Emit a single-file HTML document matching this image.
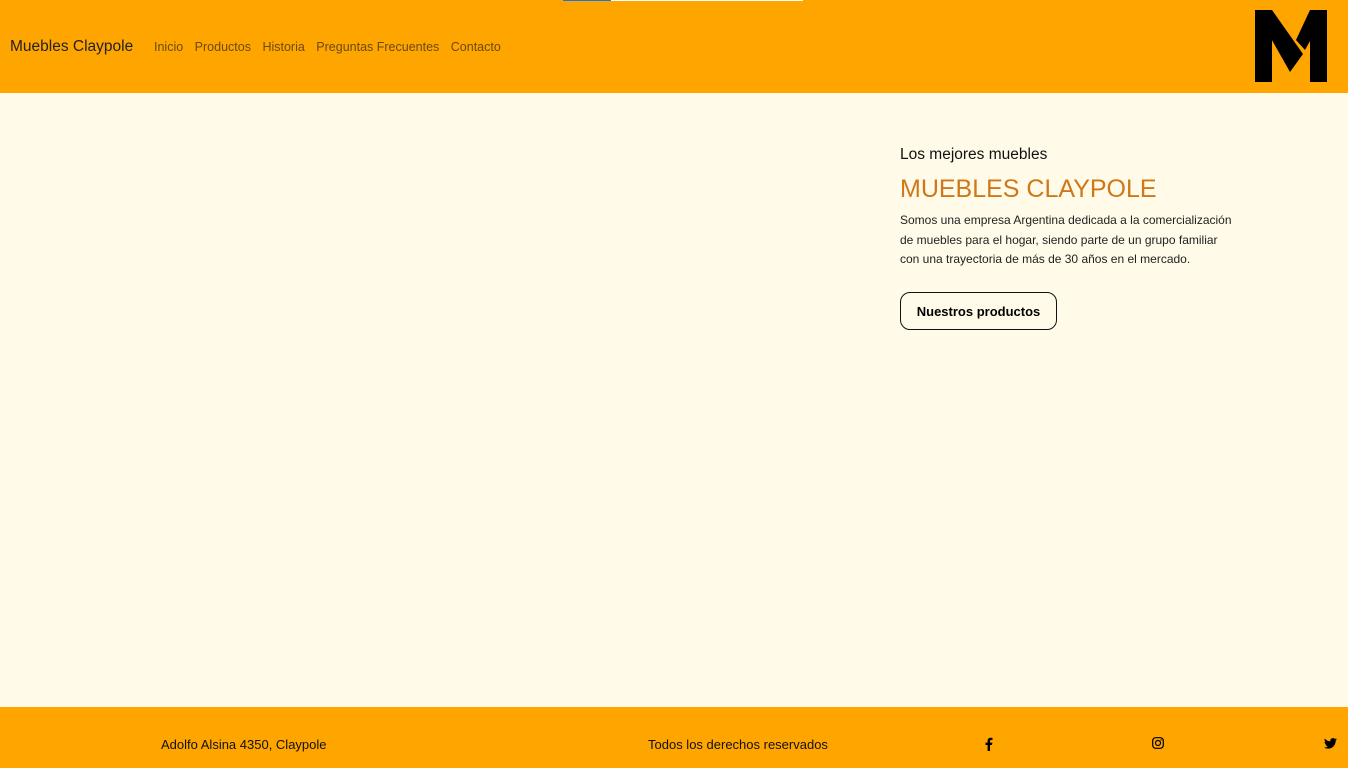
<!DOCTYPE html>
<html><head><meta charset="utf-8">
<style>
*{margin:0;padding:0;box-sizing:border-box}
html,body{width:1350px;height:768px;overflow:hidden;background:#fffbe8;font-family:"Liberation Sans",sans-serif}
header{position:absolute;left:0;top:0;width:1348px;height:93px;background:#ffa500}
.strip{position:absolute;top:0;height:1px}
.brand{position:absolute;left:10px;top:38px;font-size:15.5px;color:#222}
nav{position:absolute;left:154px;top:40px;font-size:12.5px;color:#6b4a10;white-space:nowrap}
nav span{margin-right:8px}
.logo{position:absolute;left:1255px;top:10px}
.hero{position:absolute;left:900px;top:146px}
.hero h3{font-size:15.5px;font-weight:normal;color:#111}
.hero h1{font-size:25px;font-weight:normal;color:#d07818;margin-top:11px}
.hero p{font-size:12px;line-height:19.5px;color:#222;margin-top:7px;width:335px}
.btn{position:absolute;left:0;top:146px;width:157px;height:38px;border:1px solid #111;border-radius:10px;font-weight:bold;font-size:13px;display:flex;align-items:center;justify-content:center;color:#000}
footer{position:absolute;left:0;top:707px;width:1348px;height:61px;background:#ffa500;font-size:13px;color:#111}
footer .t{position:absolute;top:30px}
.rs{position:absolute;right:0;top:0;width:2px;height:768px;background:#fff}
</style></head><body>
<header>
<div class="strip" style="left:563px;width:48px;background:#1a73e8"></div>
<div class="strip" style="left:611px;width:192px;background:#fff"></div>
<div class="brand">Muebles Claypole</div>
<nav><span>Inicio</span> <span>Productos</span> <span>Historia</span> <span>Preguntas Frecuentes</span> <span>Contacto</span></nav>
<svg class="logo" width="72" height="72" viewBox="0 0 72 72">
<rect x="0" y="0" width="17" height="72" fill="#000"/>
<rect x="55" y="0" width="17" height="72" fill="#000"/>
<polygon points="0,0 17,0 48,44 35,62" fill="#000"/>
<polygon points="55,0 72,0 50,40 41,30" fill="#000"/>
<line x1="40" y1="31" x2="48" y2="41" stroke="#ffa500" stroke-width="2"/>
</svg>
</header>
<div class="hero">
<h3>Los mejores muebles</h3>
<h1>MUEBLES CLAYPOLE</h1>
<p>Somos una empresa Argentina dedicada a la comercialización de muebles para el hogar, siendo parte de un grupo familiar con una trayectoria de más de 30 años en el mercado.</p>
<div class="btn">Nuestros productos</div>
</div>
<footer>
<div class="t" style="left:161px">Adolfo Alsina 4350, Claypole</div>
<div class="t" style="left:648px">Todos los derechos reservados</div>
<svg style="position:absolute;left:984px;top:30px" width="9" height="14" viewBox="0 0 9 14"><path d="M6 14V8h2l.4-2.4H6V4.2c0-.7.3-1.2 1.3-1.2H8.5V.9C8 .8 7.3.7 6.6.7 4.8.7 3.6 1.8 3.6 3.8v1.8H1.5V8h2.1v6z" fill="#000"/></svg>
<svg style="position:absolute;left:1152px;top:30px" width="12" height="12" viewBox="0 0 12 12"><rect x="0.7" y="0.7" width="10.6" height="10.6" rx="3" fill="none" stroke="#000" stroke-width="1.2"/><circle cx="6" cy="6" r="2.5" fill="none" stroke="#000" stroke-width="1.2"/><circle cx="9.1" cy="2.9" r=".7" fill="#000"/></svg>
<svg style="position:absolute;left:1324px;top:31px" width="13" height="11" viewBox="0 0 24 20"><path d="M24 2.4a9.8 9.8 0 0 1-2.8.8A4.9 4.9 0 0 0 23.3.4a9.9 9.9 0 0 1-3.1 1.2A4.9 4.9 0 0 0 11.8 6 14 14 0 0 1 1.7.9a4.9 4.9 0 0 0 1.5 6.6A4.9 4.9 0 0 1 1 6.9a4.9 4.9 0 0 0 3.9 4.8 4.9 4.9 0 0 1-2.2.1 4.9 4.9 0 0 0 4.6 3.4A9.9 9.9 0 0 1 0 17.3 14 14 0 0 0 7.5 19.5c9 0 14-7.5 14-14v-.6A10 10 0 0 0 24 2.4z" fill="#000"/></svg>
</footer>
<div class="rs"></div>
</body></html>
